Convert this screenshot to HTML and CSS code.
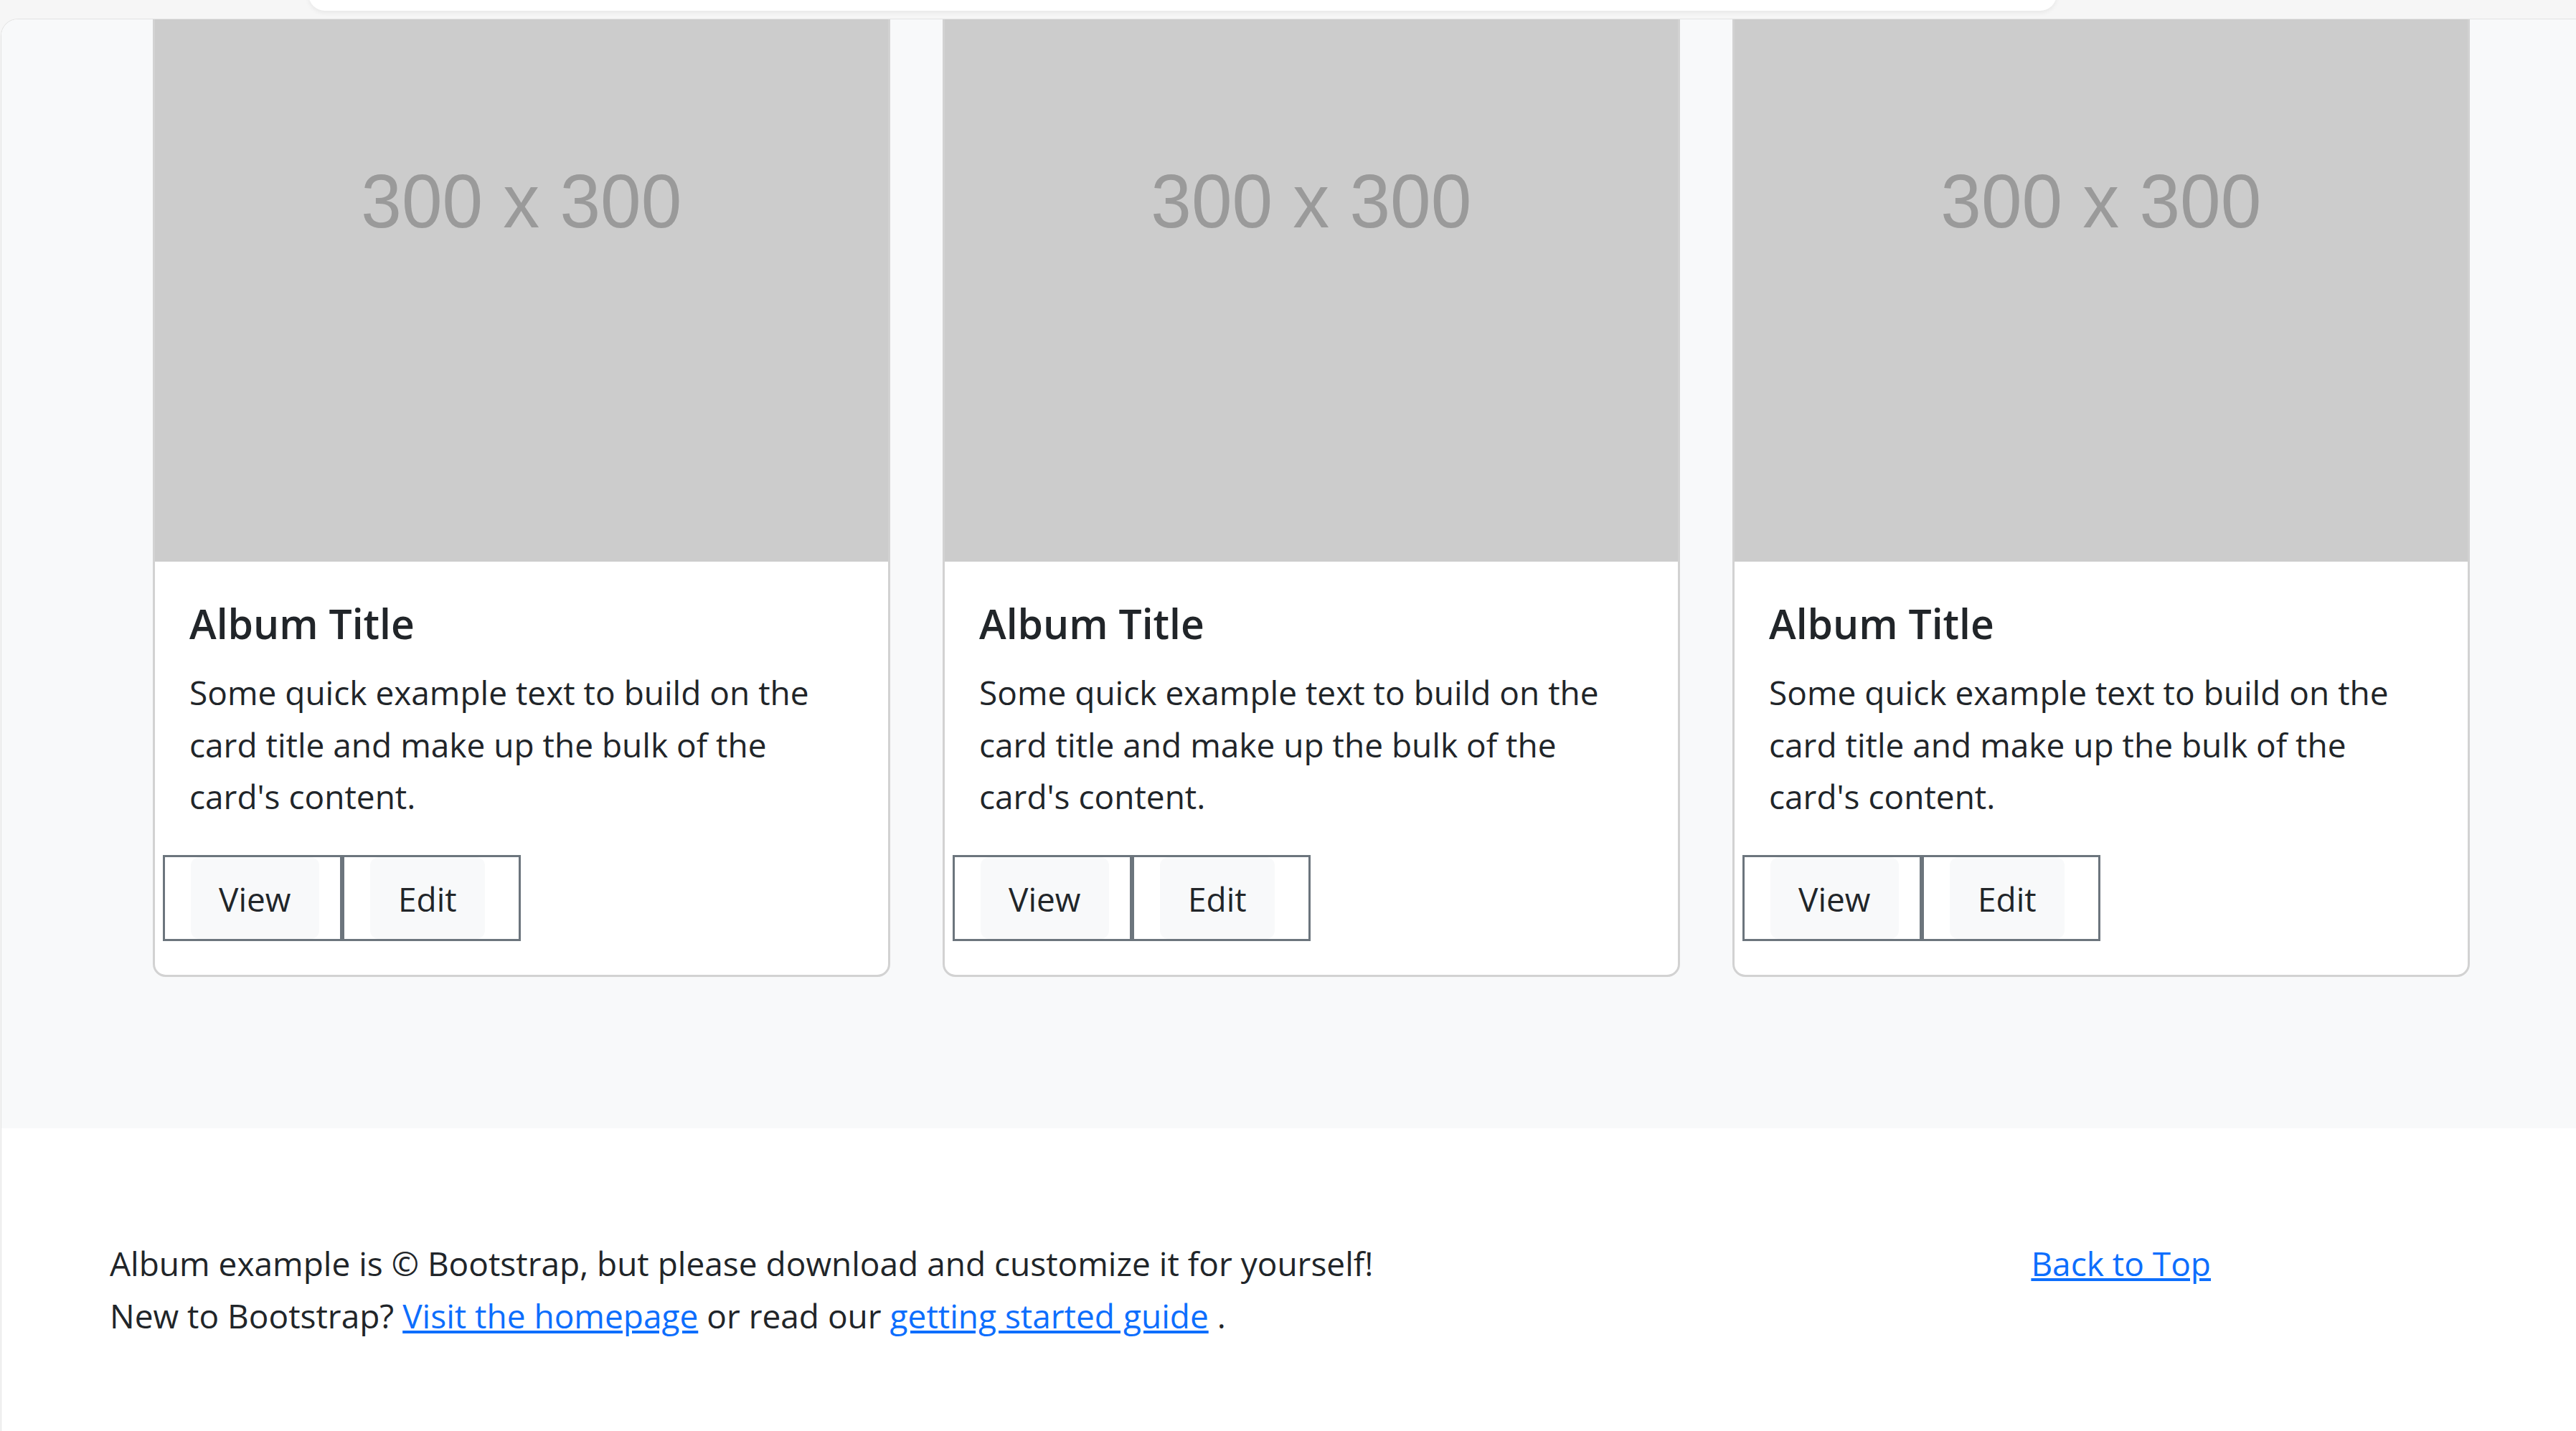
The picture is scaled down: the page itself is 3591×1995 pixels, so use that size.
FILE: index.html
```html
<!DOCTYPE html>
<html lang="en">
<head>
<meta charset="utf-8">
<title>Album example</title>
<link rel="stylesheet" href="styles.css">
</head>
<body>
<div class="topbar"><div class="tab"></div></div>
<div class="panel">
  <main class="album">
    <div class="cards">
      <div class="card">
        <div class="thumb"><span class="thumb-label">300 x 300</span></div>
        <div class="card-body">
          <h5 class="title">Album Title</h5>
          <p class="text">Some quick example text to build on the card title and make up the bulk of the card's content.</p>
          <div class="btns">
            <div class="btn-cell btn-view"><button class="btn-inner" type="button">View</button></div>
            <div class="btn-cell btn-edit"><button class="btn-inner" type="button">Edit</button></div>
          </div>
        </div>
      </div>
      <div class="card">
        <div class="thumb"><span class="thumb-label">300 x 300</span></div>
        <div class="card-body">
          <h5 class="title">Album Title</h5>
          <p class="text">Some quick example text to build on the card title and make up the bulk of the card's content.</p>
          <div class="btns">
            <div class="btn-cell btn-view"><button class="btn-inner" type="button">View</button></div>
            <div class="btn-cell btn-edit"><button class="btn-inner" type="button">Edit</button></div>
          </div>
        </div>
      </div>
      <div class="card">
        <div class="thumb"><span class="thumb-label">300 x 300</span></div>
        <div class="card-body">
          <h5 class="title">Album Title</h5>
          <p class="text">Some quick example text to build on the card title and make up the bulk of the card's content.</p>
          <div class="btns">
            <div class="btn-cell btn-view"><button class="btn-inner" type="button">View</button></div>
            <div class="btn-cell btn-edit"><button class="btn-inner" type="button">Edit</button></div>
          </div>
        </div>
      </div>
    </div>
  </main>
  <footer class="footer">
    <div class="foot-left">
      <p class="foot-line">Album example is © Bootstrap, but please download and customize it for yourself!</p>
      <p class="foot-line">New to Bootstrap? <a class="link" href="#">Visit the homepage</a> or read our <a class="link" href="#">getting started guide</a> .</p>
    </div>
    <p class="foot-line foot-right"><a class="link" href="#">Back to Top</a></p>
  </footer>
</div>
</body>
</html>
```
FILE: styles.css
```css
html, body {
  margin: 0;
  padding: 0;
}
body {
  width: 3591px;
  height: 1995px;
  overflow: hidden;
  background: #f6f6f6;
  font-family: "Open Sans", "Noto Sans", sans-serif;
  color: #212529;
}
.topbar {
  height: 26px;
  display: flex;
  align-items: flex-start;
  padding-left: 430px;
}
.tab {
  width: 2437px;
  height: 46px;
  margin-top: -31px;
  background: #ffffff;
  border-radius: 30px;
  box-shadow: 0 3px 6px rgba(0, 0, 0, 0.06);
}
.panel {
  margin-left: 1px;
  height: 1968px;
  border-top: 1px solid #e3e3e3;
  border-left: 1px solid #e3e3e3;
  border-top-left-radius: 24px;
  background: #ffffff;
  overflow: hidden;
}
.album {
  display: block;
  height: 1546px;
  background: #f8f9fa;
  overflow: hidden;
}
.cards {
  display: flex;
  gap: 73px;
  padding-left: 211px;
  margin-top: -268px;
}
.card {
  box-sizing: border-box;
  flex: 0 0 1028px;
  width: 1028px;
  background: #ffffff;
  border: 3px solid #d2d2d2;
  border-radius: 18px;
  overflow: hidden;
}
.thumb {
  box-sizing: border-box;
  height: 1021px;
  padding-top: 15px;
  background: #cccccc;
  display: flex;
  align-items: center;
  justify-content: center;
}
.thumb-label {
  font-family: "Liberation Sans", Arial, sans-serif;
  font-size: 106px;
  color: #9a9a9a;
  transform: scaleX(0.96);
  white-space: nowrap;
}
.card-body {
  padding: 52px 48px 47px;
}
.title {
  margin: 0 0 26px;
  font-size: 57px;
  font-weight: 600;
  line-height: 68px;
}
.text {
  margin: 0 0 45px;
  max-width: 900px;
  font-size: 46px;
  line-height: 72.5px;
}
.btns {
  display: flex;
  margin-left: -37px;
}
.btn-cell {
  box-sizing: border-box;
  height: 120px;
  border: 3px solid #6c757d;
  padding-left: 36px;
  display: flex;
  background: #ffffff;
}
.btn-view {
  width: 250px;
}
.btn-edit {
  width: 249px;
}
.btn-inner {
  display: flex;
  align-items: center;
  margin: 0;
  border: 0;
  padding: 4px 39px 0;
  background: #f8f9fa;
  border-radius: 12px;
  font-family: "Open Sans", "Noto Sans", sans-serif;
  font-size: 46px;
  line-height: 69px;
  color: #212529;
}
.footer {
  display: flex;
  justify-content: space-between;
  padding: 152px 509px 0 151px;
  background: #ffffff;
}
.foot-line {
  margin: 0;
  font-size: 46px;
  line-height: 72.5px;
}
.link {
  color: #0d6efd;
  text-decoration: underline;
}
```
